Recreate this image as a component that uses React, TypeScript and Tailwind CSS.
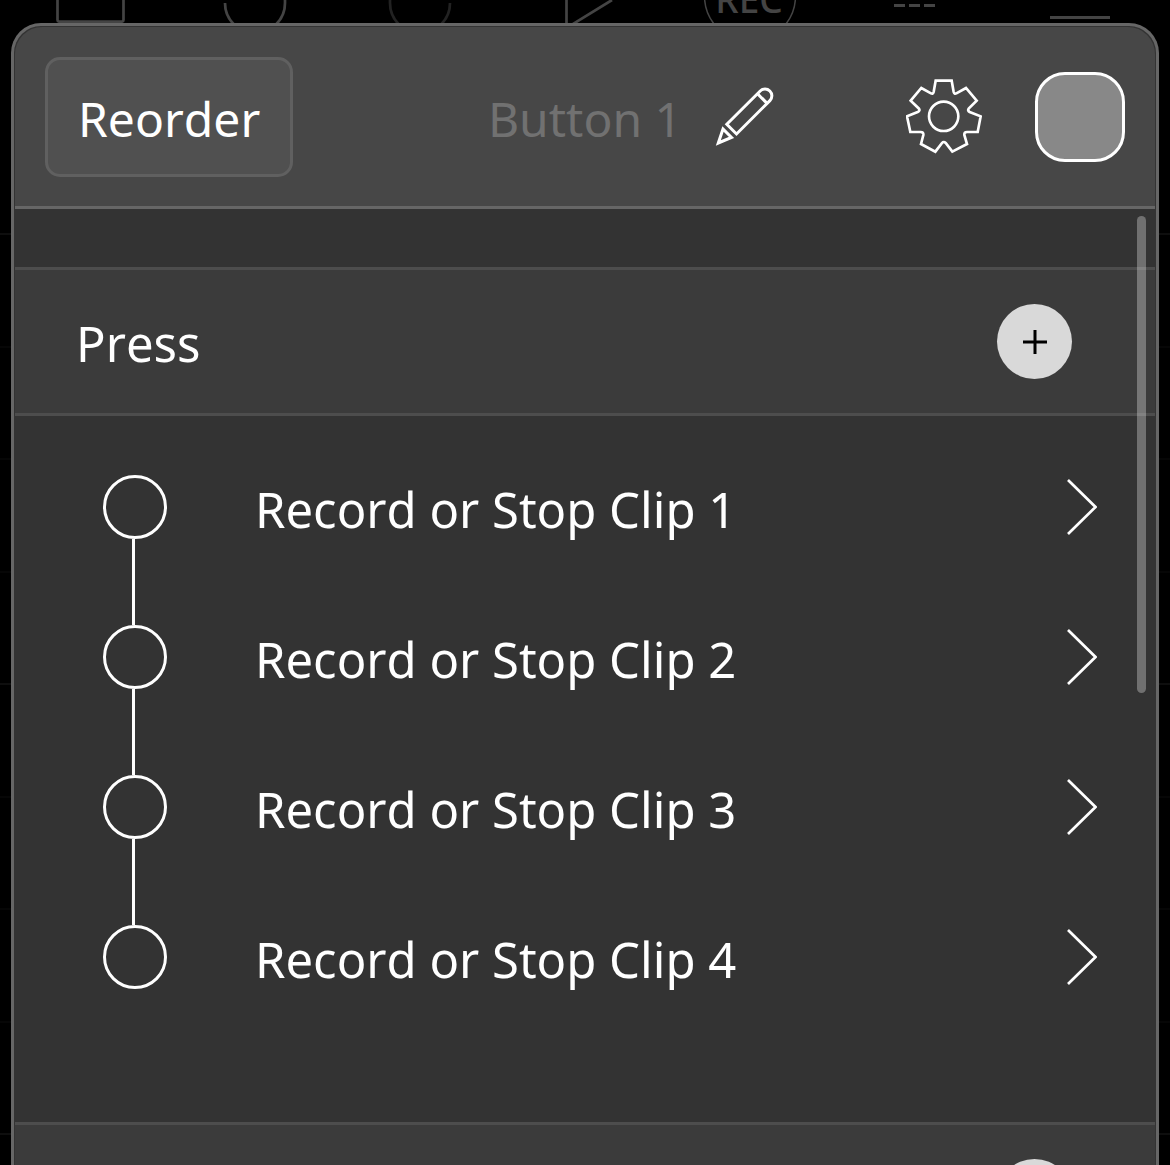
import React, { useState } from "react";

const actions = [
  "Record or Stop Clip 1",
  "Record or Stop Clip 2",
  "Record or Stop Clip 3",
  "Record or Stop Clip 4",
];

const PencilIcon = () => (
  <svg
    viewBox="0 0 60 60"
    className="size-[60px]"
    fill="none"
    stroke="currentColor"
    strokeWidth="3"
    aria-hidden="true"
  >
    <path d="M11.8 37.3 45.2 4A6.8 6.8 0 0 1 54.9 13.6L21.5 47Z" />
    <path d="M42.5 6.7 52.1 16.4" />
    <path d="M3.3 56 8 42 16.5 50.5Z" />
  </svg>
);

const GearIcon = () => (
  <svg
    viewBox="33 27 228 228"
    className="size-[76px]"
    fill="none"
    stroke="currentColor"
    strokeWidth="8"
    aria-hidden="true"
  >
    <path d="M122 32H170L176 66Q178 73 184 70L213 54 245 92 221 116Q217 122 224 126L257 139 248 186H216Q207 186 208 195L216 222 172 245 152 219Q146 213 141 219L121 245 78 222 85 195Q86 186 77 186H46L36 139 68 126Q76 122 72 116L47 92 79 54 108 70Q114 73 116 66Z" />
    <circle cx="146" cy="139" r="44" />
  </svg>
);

const PlusIcon = () => (
  <svg
    viewBox="0 0 24 24"
    className="size-6"
    stroke="currentColor"
    strokeWidth="3"
    aria-hidden="true"
  >
    <path d="M12 0V24M0 12H24" />
  </svg>
);

const ChevronIcon = () => (
  <svg
    viewBox="0 0 30 56"
    className="h-14 w-[30px]"
    fill="none"
    stroke="currentColor"
    strokeWidth="2.7"
    aria-hidden="true"
  >
    <path d="M1 1 28.5 28 1 55" />
  </svg>
);

// Bottom part of the looper toolbar that peeks out above the panel
const Toolbar = () => (
  <div className="grid h-[23px] grid-cols-7 justify-items-center overflow-hidden px-2 text-[#444444]">
    <svg viewBox="0 0 92 23" className="h-[23px] w-[92px]" fill="none" stroke="currentColor" strokeWidth="2.7">
      <path d="M13.5 0V20Q13.5 21.7 15.5 21.7H77.5Q79.5 21.7 79.5 20V0" />
    </svg>
    <svg viewBox="0 0 92 23" className="h-[23px] w-[92px]" fill="none" stroke="currentColor" strokeWidth="2.7">
      <path d="M16 3A30 30 0 0 0 76 3V0" />
    </svg>
    <svg viewBox="0 0 92 23" className="h-[23px] w-[92px] text-[#222222]" fill="none" stroke="currentColor" strokeWidth="2.7">
      <path d="M16 0V3A30 30 0 0 0 76 3" />
    </svg>
    <svg viewBox="0 0 92 23" className="h-[23px] w-[92px]" fill="none" stroke="currentColor" strokeWidth="2.7">
      <path d="M27.5 0V28L73 0" />
    </svg>
    <svg viewBox="0 0 92 23" className="h-[23px] w-[92px]" fill="none" stroke="currentColor" strokeWidth="1.5">
      <circle cx="46" cy="-4" r="45.5" />
      <text
        x="45"
        y="13"
        textAnchor="middle"
        fill="currentColor"
        stroke="none"
        className="font-['Noto_Sans',sans-serif] text-[37px] font-medium"
      >
        REC
      </text>
    </svg>
    <svg viewBox="0 0 92 23" className="h-[23px] w-[92px]" stroke="currentColor" strokeWidth="3">
      <path d="M25 5.5H36M40 5.5H51M55 5.5H66" />
    </svg>
    <svg viewBox="0 0 92 23" className="h-[23px] w-[92px]" stroke="currentColor" strokeWidth="3">
      <path d="M16 17.5H76" />
    </svg>
  </div>
);

const Backdrop = () => (
  <div className="absolute inset-x-0 top-[233px]" aria-hidden="true">
    {[0, 1, 2].map((bar) => (
      <div key={bar}>
        <div className="h-[113px] border-t-2 border-[#0e0e0e]" />
        <div className="h-[112px] border-t-2 border-[#060606]" />
        <div className="h-[113px] border-t-2 border-[#060606]" />
        <div className="h-[112px] border-t-2 border-[#060606]" />
      </div>
    ))}
  </div>
);

const SectionHeader = ({ title }: { title?: string }) => (
  <div className="flex h-[149px] items-center border-y-[3px] border-[#4d4d4d] bg-[#3b3b3b] pr-[83px] pl-[61px]">
    {title && <h2 className="pt-[3px]">{title}</h2>}
    <button
      type="button"
      aria-label="Add action"
      className="ml-auto flex size-[75px] items-center justify-center rounded-full bg-[#d9d9d9] text-black"
    >
      <PlusIcon />
    </button>
  </div>
);

const App = () => {
  const [name, setName] = useState("");

  return (
    <div className="relative flex h-screen flex-col overflow-hidden bg-black font-['Noto_Sans',sans-serif] text-5xl text-white [font-kerning:none]">
      <Backdrop />
      <Toolbar />

      <main className="relative mx-[11px] flex min-h-0 flex-1 flex-col overflow-hidden rounded-t-[30px] border-[3px] border-b-0 border-[#666666] bg-[#333333] px-px pt-px">
        <header className="grid h-[182px] shrink-0 grid-cols-[1fr_auto_1fr] items-start rounded-t-[27px] border-b-[3px] border-[#666666] bg-[#474747] px-[30px] pt-[30px]">
          <button
            type="button"
            className="h-[120px] justify-self-start rounded-[15px] border-[3px] border-[#606060] bg-[#505050] px-[30px] pt-[3px]"
          >
            Reorder
          </button>
          <input
            type="text"
            aria-label="Button name"
            placeholder="Button 1"
            value={name}
            onChange={(e) => setName(e.target.value)}
            className="h-[120px] w-[200px] bg-transparent pt-[3px] text-center outline-none placeholder:text-[#717171]"
          />
          <div className="flex h-[120px] items-center pl-[30px]">
            <button type="button" aria-label="Rename">
              <PencilIcon />
            </button>
            <button type="button" aria-label="Settings" className="ml-auto">
              <GearIcon />
            </button>
            <button
              type="button"
              aria-label="Color"
              className="ml-[53px] size-[90px] rounded-[30px] border-[3px] border-white bg-[#888888]"
            />
          </div>
        </header>

        <div className="relative min-h-0 flex-1 overflow-hidden pt-[58px] text-[49px] leading-[50px]">
          <section>
            <SectionHeader title="Press" />
            <ul className="pt-4 pb-[90px]">
              {actions.map((action, i) => (
                <li key={action}>
                  <button
                    type="button"
                    className="flex h-[150px] w-full items-center pr-[58px] pl-[88px] text-left"
                  >
                    <span className="flex h-full w-16 flex-col">
                      <span
                        className={`ml-[29px] w-[3px] flex-1 ${i > 0 ? "bg-white" : ""}`}
                      />
                      <span className="size-16 rounded-full border-[3px] border-white" />
                      <span
                        className={`ml-[29px] w-[3px] flex-1 ${i < actions.length - 1 ? "bg-white" : ""}`}
                      />
                    </span>
                    <span className="flex-1 pt-[3px] pl-[88px]">{action}</span>
                    <ChevronIcon />
                  </button>
                </li>
              ))}
            </ul>
          </section>
          <section>
            <SectionHeader />
          </section>

          <div className="absolute top-[7px] right-[9px] h-[477px] w-[9px] rounded-full bg-white/30" />
        </div>
      </main>
    </div>
  );
};

export default App;
